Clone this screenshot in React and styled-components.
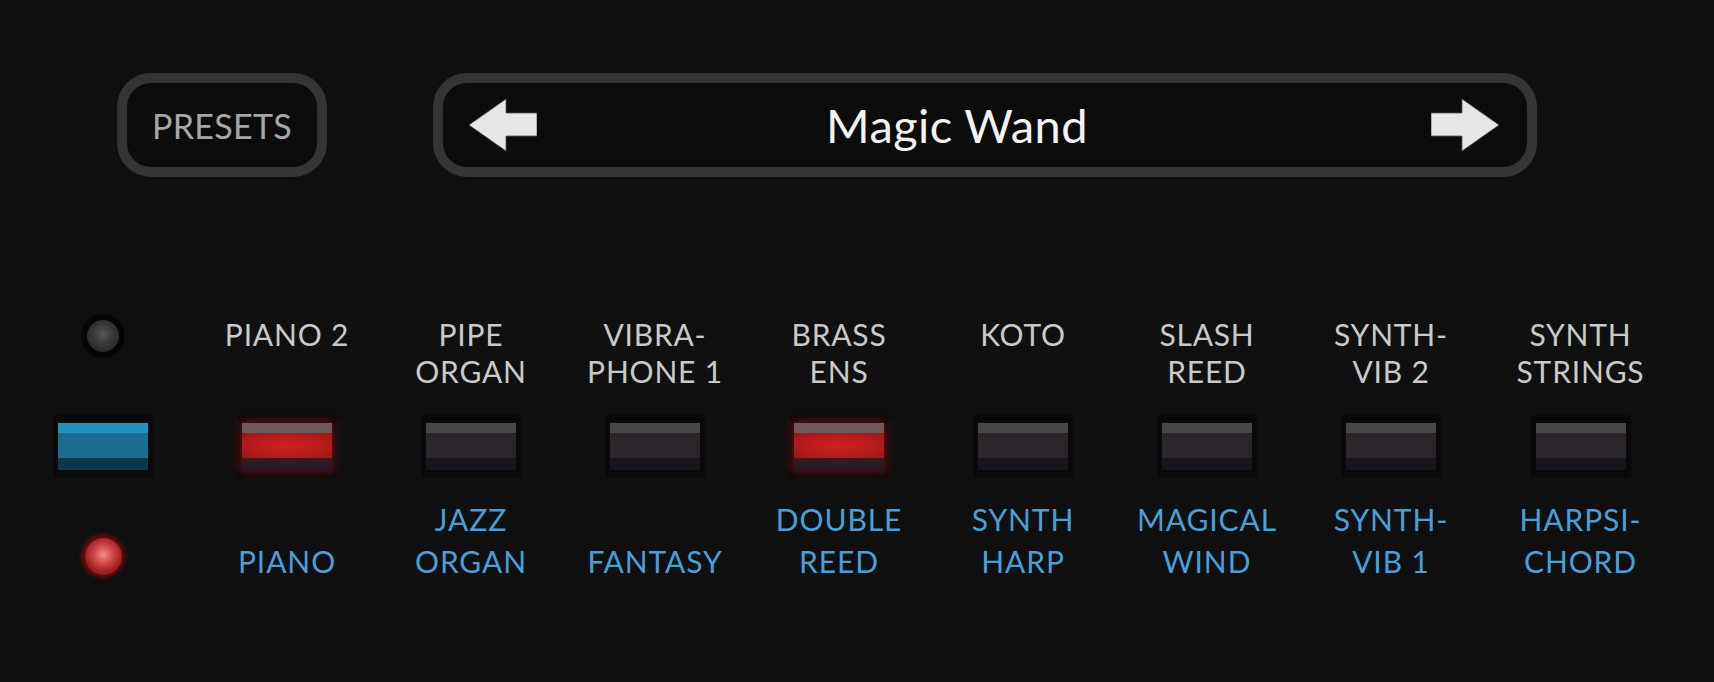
import * as React from 'react';
import styled, { createGlobalStyle } from 'styled-components';

const GlobalStyle = createGlobalStyle`
    html, body {
        margin: 0;
        padding: 0;
        background: #101010;
    }
    body {
        font-family: Lato, 'Noto Sans', 'Liberation Sans', sans-serif;
    }
`;

const Panel = styled.div`
    width: 1714px;
    height: 682px;
    overflow: hidden;
    background: #101010;
    box-sizing: border-box;
    padding-top: 73px;
`;

const Header = styled.div`
    display: flex;
    align-items: center;
    gap: 106px;
    padding-left: 117px;
`;

const PillBox = styled.div`
    box-sizing: border-box;
    height: 104px;
    border: 10px solid #343434;
    border-radius: 34px;
    background: #0c0c0c;
    display: flex;
    align-items: center;
`;

const PresetsButton = styled(PillBox)`
    width: 210px;
    justify-content: center;
    color: #a6a6a6;
    font-size: 34px;
    letter-spacing: 0.3px;
`;

const PatchBar = styled(PillBox)`
    width: 1104px;
    padding: 0 28px 0 26px;
    justify-content: space-between;
`;

const PatchName = styled.div`
    flex: 1;
    text-align: center;
    padding-right: 54px;
    color: #f2f2f2;
    font-size: 47px;
    letter-spacing: 0.4px;
`;

const ArrowSvg = styled.svg`
    display: block;
    width: 68px;
    height: 52px;
    transform: ${p => (p.$flip ? 'scaleX(-1)' : 'none')};
`;

const Arrow = ({ flip }) => (
    <ArrowSvg $flip={flip} viewBox="0 0 68 52">
        <polygon
            points="0,26 37,0 37,14 68,14 68,37 37,37 37,52"
            fill="#e6e6e6"
            stroke="#555"
            strokeWidth="0.8"
        />
    </ArrowSvg>
);

const Grid = styled.div`
    margin-top: 139px;
    padding-left: 11px;
    display: grid;
    grid-template-columns: repeat(8, 184px) 195px;
`;

const Column = styled.div`
    display: flex;
    flex-direction: column;
    align-items: center;
`;

const TopSlot = styled.div`
    height: 74px;
    display: flex;
    flex-direction: column;
    align-items: center;
    justify-content: flex-start;
    margin-bottom: 25px;
`;

const BottomSlot = styled.div`
    height: 84px;
    display: flex;
    flex-direction: column;
    align-items: center;
    justify-content: flex-end;
    margin-top: 20px;
`;

const TopLabel = styled.div`
    color: #c9c9c9;
    font-size: 30px;
    line-height: 37px;
    letter-spacing: 0.8px;
    text-align: center;
    white-space: pre-line;
`;

const BottomLabel = styled.div`
    color: #4a9fd6;
    font-size: 30px;
    line-height: 42px;
    letter-spacing: 0.9px;
    text-align: center;
    white-space: pre-line;
`;

const ButtonFrame = styled.div`
    box-sizing: border-box;
    width: 100px;
    height: 63px;
    padding: 8px 5px;
    background: #0a0a0a;
`;

const faces = {
    off: {
        top: '#49454a',
        mid: '#2a2629',
        bottom: '#17161f',
        glow: 'none',
    },
    red: {
        top: '#6f585c',
        mid: 'radial-gradient(ellipse at 50% 50%, #cc2222 0%, #b81c1c 55%, #9a1717 100%)',
        bottom: 'linear-gradient(#3a1a22, #201a28)',
        glow: '0 0 9px 2px rgba(190, 25, 25, 0.5)',
    },
    blue: {
        top: '#1f91c5',
        mid: '#1a6d8f',
        bottom: '#0e3749',
        glow: 'none',
    },
};

const ButtonFace = styled.div`
    height: 47px;
    display: flex;
    flex-direction: column;
    box-shadow: ${p => faces[p.$kind].glow};
`;

const Band = styled.div`
    height: ${p => p.$h}px;
    background: ${p => p.$bg};
`;

const TabButton = ({ kind }) => {
    const f = faces[kind];
    return (
        <ButtonFrame>
            <ButtonFace $kind={kind}>
                <Band $h={10} $bg={f.top} />
                <Band $h={25} $bg={f.mid} />
                <Band $h={12} $bg={f.bottom} />
            </ButtonFace>
        </ButtonFrame>
    );
};

const LedRing = styled.div`
    box-sizing: border-box;
    width: 44px;
    height: 44px;
    border-radius: 50%;
    display: flex;
    align-items: center;
    justify-content: center;
    background: ${p => (p.$on ? 'radial-gradient(circle, #5a0c0c 60%, #1c0505 100%)' : '#060606')};
    box-shadow: ${p => (p.$on ? '0 0 5px rgba(140, 15, 15, 0.45)' : 'none')};
    margin-top: ${p => (p.$on ? '0' : '-2px')};
    margin-bottom: ${p => (p.$on ? '4px' : '0')};
`;

const LedBall = styled.div`
    width: ${p => (p.$on ? 37 : 32)}px;
    height: ${p => (p.$on ? 37 : 32)}px;
    border-radius: 50%;
    background: ${p =>
        p.$on
            ? 'radial-gradient(circle at 50% 45%, #f28a8a 0%, #d45050 30%, #a42222 62%, #620e0e 100%)'
            : 'radial-gradient(circle at 50% 45%, #565656 0%, #363636 45%, #1c1c1c 100%)'};
`;

const voices = [
    { top: 'PIANO 2', bottom: 'PIANO', on: true },
    { top: 'PIPE\nORGAN', bottom: 'JAZZ\nORGAN' },
    { top: 'VIBRA-\nPHONE 1', bottom: 'FANTASY' },
    { top: 'BRASS\nENS', bottom: 'DOUBLE\nREED', on: true },
    { top: 'KOTO', bottom: 'SYNTH\nHARP' },
    { top: 'SLASH\nREED', bottom: 'MAGICAL\nWIND' },
    { top: 'SYNTH-\nVIB 2', bottom: 'SYNTH-\nVIB 1' },
    { top: 'SYNTH\nSTRINGS', bottom: 'HARPSI-\nCHORD' },
];

const App = () => (
    <Panel>
        <GlobalStyle />
        <Header>
            <PresetsButton>PRESETS</PresetsButton>
            <PatchBar>
                <Arrow />
                <PatchName>Magic Wand</PatchName>
                <Arrow flip />
            </PatchBar>
        </Header>

        <Grid>
            <Column>
                <TopSlot>
                    <LedRing>
                        <LedBall />
                    </LedRing>
                </TopSlot>
                <TabButton kind="blue" />
                <BottomSlot>
                    <LedRing $on>
                        <LedBall $on />
                    </LedRing>
                </BottomSlot>
            </Column>

            {voices.map(v => (
                <Column key={v.top}>
                    <TopSlot>
                        <TopLabel>{v.top}</TopLabel>
                    </TopSlot>
                    <TabButton kind={v.on ? 'red' : 'off'} />
                    <BottomSlot>
                        <BottomLabel>{v.bottom}</BottomLabel>
                    </BottomSlot>
                </Column>
            ))}
        </Grid>
    </Panel>
);

export default App;
